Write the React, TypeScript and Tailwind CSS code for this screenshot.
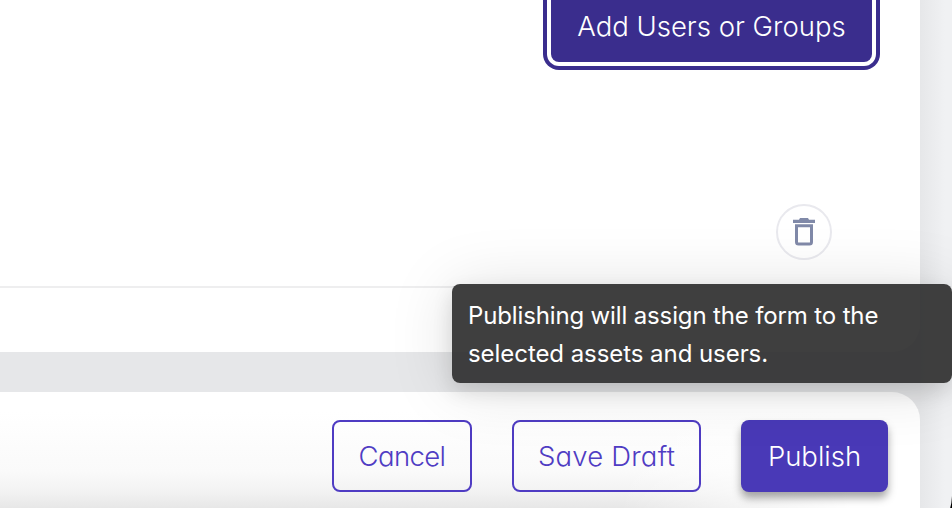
import React from "react";

function TrashIcon() {
  return (
    <svg width="22" height="28" viewBox="0 0 22 28" fill="none" aria-hidden="true">
      <path d="M7 0h8l1 1.8h6V5H0V1.8h6z" fill="#8089a8" />
      <path d="M3.5 7.8h15v16.2a2 2 0 0 1-2 2h-11a2 2 0 0 1-2-2z" stroke="#8089a8" strokeWidth="3" />
    </svg>
  );
}

export default function App() {
  return (
    <div className="relative flex h-[508px] w-[952px] flex-col gap-10 overflow-hidden bg-[#eeeff1] bg-[linear-gradient(to_right,#e6e7e9_920px,#f0f1f3_945px)] font-['Inter','Lato',sans-serif] text-[27.5px] font-[340] [font-feature-settings:'cv11']">
      <section className="flex h-[352px] w-[920px] shrink-0 flex-col rounded-br-[28px] bg-white">
        <div className="flex h-[204px] items-start justify-end pr-12">
          <button className="flex h-[62px] w-[321px] items-end justify-center rounded-b-lg bg-[#3a2d8d] pb-[16px] leading-[40px] whitespace-nowrap text-white shadow-[0_0_0_4px_#fff,0_0_0_8px_#3a2d8d]">
            <span>Add Users or Groups</span>
          </button>
        </div>
        <div className="flex h-[84px] items-start justify-end border-b-2 border-[#eeeeef] pr-[88px]">
          <button aria-label="Delete" className="flex size-14 items-center justify-center rounded-full border-2 border-[#e9e9ee] bg-white">
            <TrashIcon />
          </button>
        </div>
      </section>
      <footer className="flex h-[116px] w-[920px] shrink-0 items-start justify-end rounded-tr-[28px] bg-white bg-[linear-gradient(to_right,transparent_620px,#fff_850px),linear-gradient(to_bottom,#fff_20px,#fafafa_80px,#f2f2f2_100px,#e7e7e7_116px)] pt-7 pr-8">
        <button className="mr-10 flex h-[72px] w-[140px] items-center justify-center rounded-lg border-2 border-[#4f3cc3] pt-0.5 text-[#4f3cc3]">
          <span className="tracking-[-0.6px]">Cancel</span>
        </button>
        <button className="mr-10 flex h-[72px] w-[189px] items-center justify-center rounded-lg border-2 border-[#4f3cc3] pt-0.5 whitespace-nowrap text-[#4f3cc3]">
          <span className="tracking-[0.2px]">Save Draft</span>
        </button>
        <button className="flex h-[72px] w-[147px] items-center justify-center rounded-lg bg-[#4939b7] pt-0.5 text-white shadow-[0_6px_8px_rgba(0,0,0,0.35)]">
          <span>Publish</span>
        </button>
      </footer>
      <div role="tooltip" className="absolute top-[284px] left-[452px] h-[99px] w-[500px] rounded-lg bg-[#2f2f2f]/92 px-4 pt-[13px] font-['Inter',sans-serif] text-[24px] leading-[38px] font-normal whitespace-nowrap text-white shadow-[0_8px_20px_rgba(0,0,0,0.12),0_4px_65px_rgba(0,0,0,0.13)] [font-feature-settings:normal]">
        <div className="tracking-[-0.14px]">Publishing will assign the form to the</div>
        <div className="tracking-[-0.06px]">selected assets and users.</div>
      </div>
      <svg className="absolute right-0 bottom-0" width="2" height="12" viewBox="0 0 2 12" aria-hidden="true">
        <path d="M2 0Q1.7 7 0.2 12H2z" fill="#000" />
      </svg>
    </div>
  );
}
